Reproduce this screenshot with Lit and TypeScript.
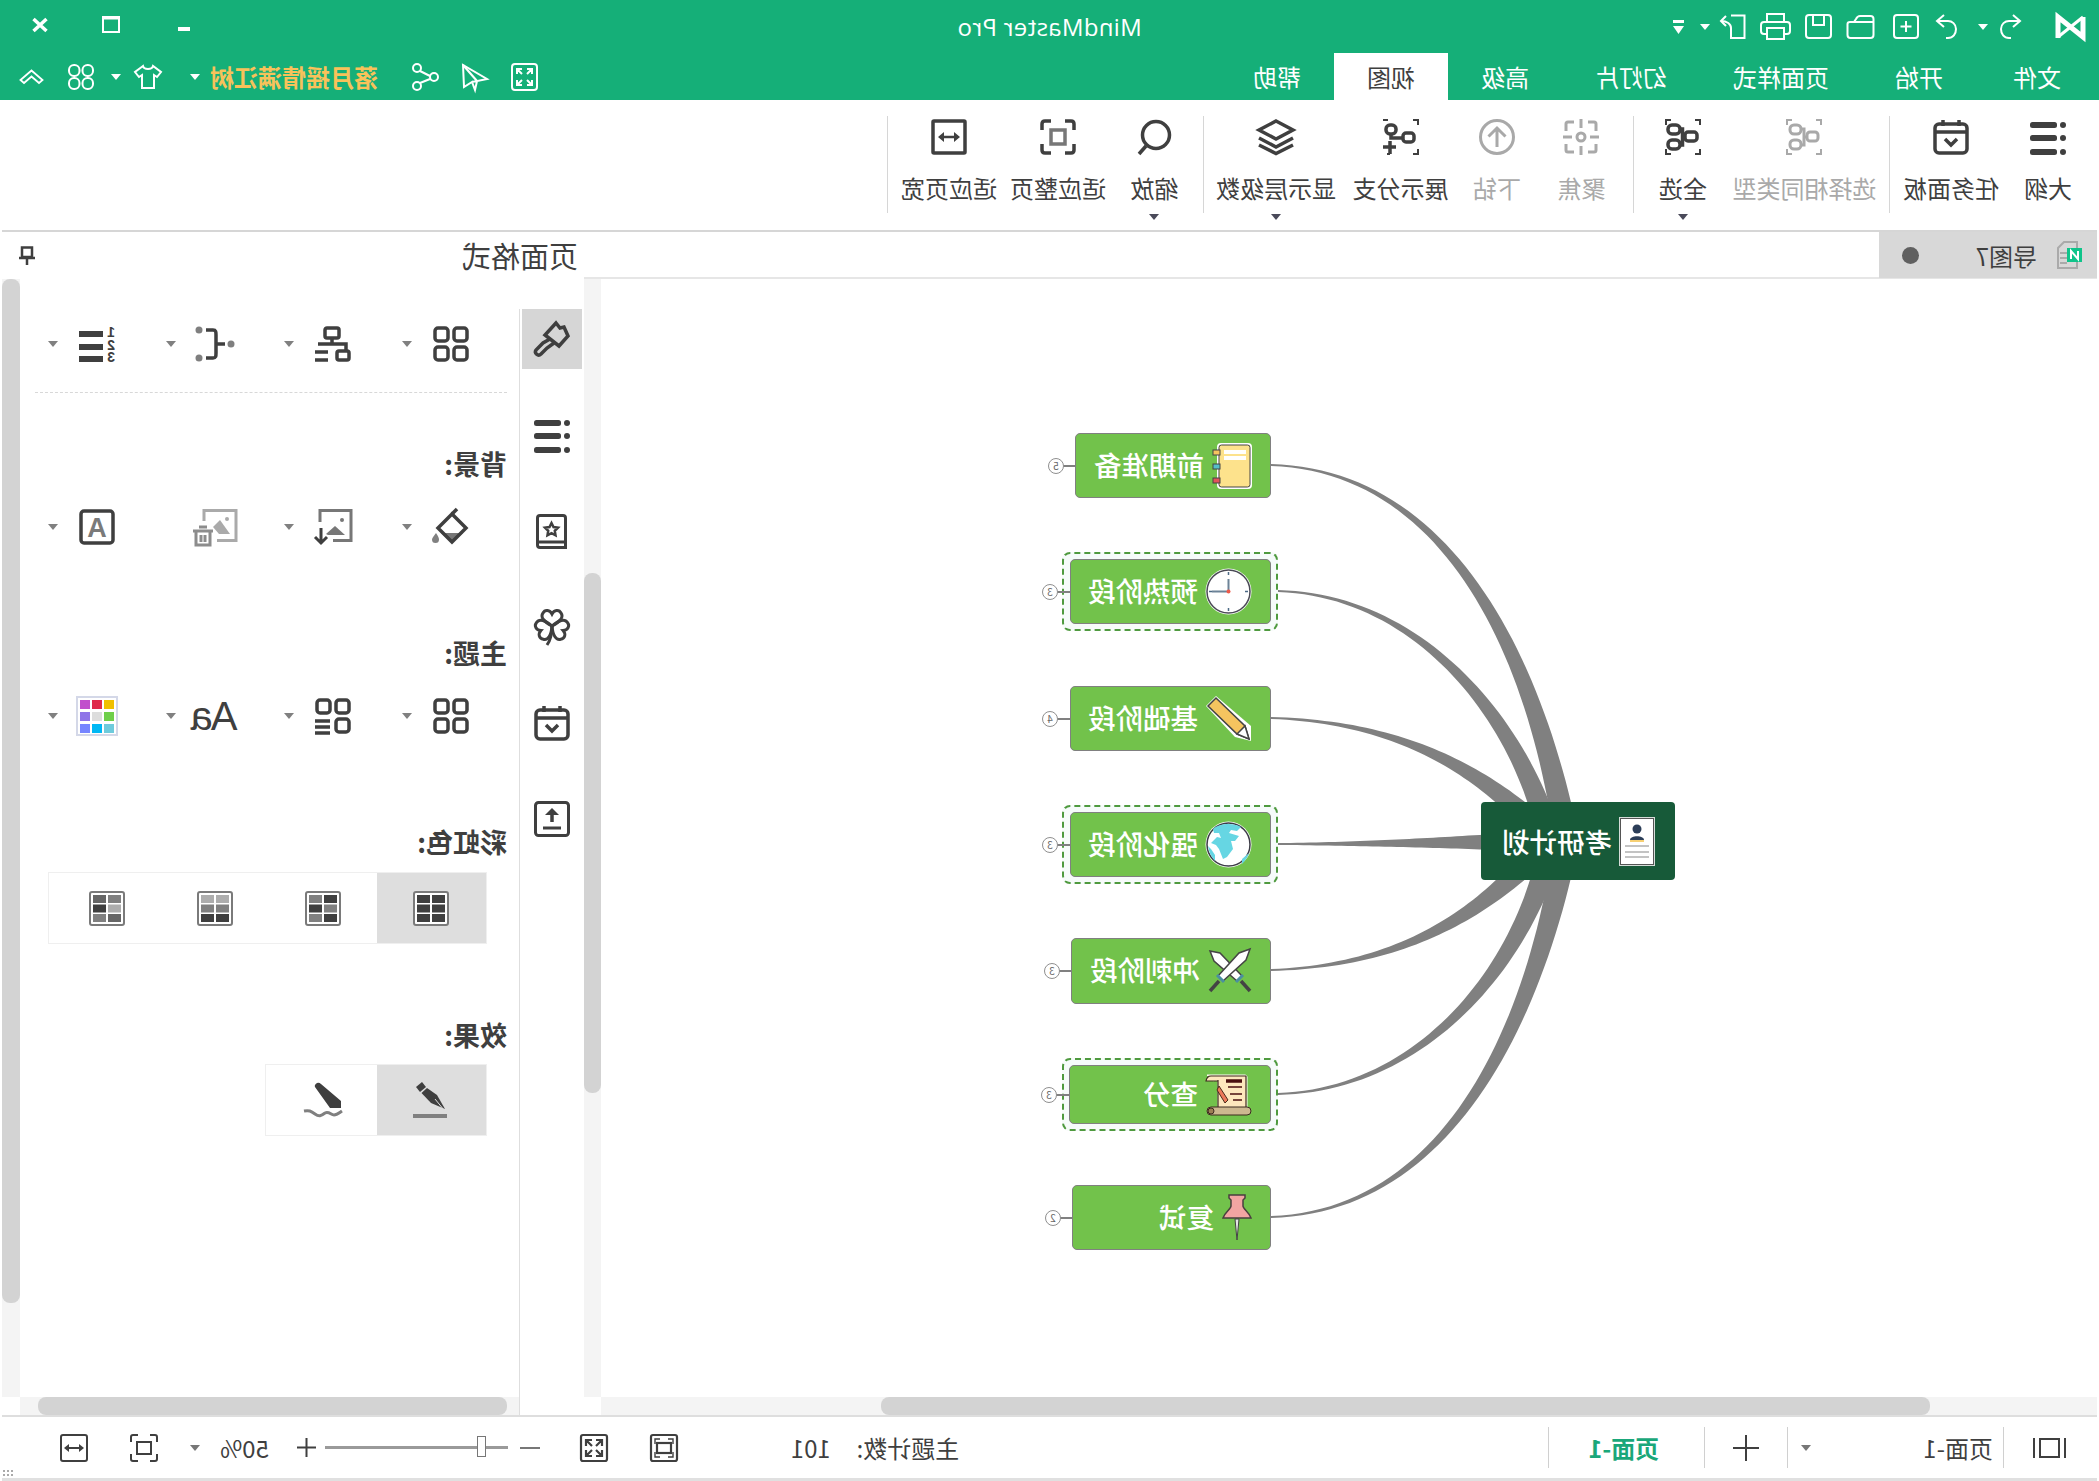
import { LitElement, css, html, svg, nothing } from 'lit';
import { customElement } from 'lit/decorators.js';

// The reference is a horizontally mirrored window. The app is laid out the normal way
// and the host is flipped; icons are drawn as seen in the reference, so they flip back.
const iconStyles = css`
    svg.ic { display: block; flex: none; transform: scaleX(-1); overflow: visible; }
`;

const CORNERS = 'M1 6V1H6M30 1H35V6M35 30V35H30M6 35H1V30';
const HEART = 'M18 18C10 14 6 9 9 5C11 1 16 2 18 6C20 2 25 1 27 5C30 9 26 14 18 18Z';

type Icon = { w: number; h: number; sw?: number; body: unknown };

const ICONS: Record<string, Icon> = {
    logo: { w: 33, h: 28, body: svg`<path d="M4 25V4L29 24V4" stroke-width="5"/><path d="M4 24L29 4" stroke-width="3"/>` },
    redo: { w: 23, h: 25, sw: 2, body: svg`<path d="M12 24H10C5 24 2 20 2 15C2 10 6 7 10 7H21"/><path d="M14 1L21 7L14 13"/>` },
    undo: { w: 22, h: 25, sw: 2, body: svg`<path d="M10 24H12C17 24 20 20 20 15C20 10 16 7 12 7H1"/><path d="M8 1L1 7L8 13"/>` },
    add: { w: 26, h: 25, sw: 2, body: svg`<rect x="1" y="1" width="24" height="23" rx="3"/><path d="M13 7V18M7.500 12.500H18.500"/>` },
    open: { w: 29, h: 25, sw: 2, body: svg`<path d="M1.500 10V21C1.500 23 2.500 24 4.500 24H24.500C26.500 24 27.500 23 27.500 21V5C27.500 3 26.500 2 24.500 2H14C12 2 11 3 10 5L8 8H4C2.500 8 1.500 9 1.500 10ZM8 8H27"/>` },
    save: { w: 27, h: 25, sw: 2, body: svg`<rect x="1" y="1" width="25" height="23" rx="3"/><path d="M8 1V11H19V1"/>` },
    print: { w: 31, h: 27, sw: 2, body: svg`<path d="M7 9V1H24V9"/><path d="M7 21H4C2 21 1 20 1 18V12C1 10 2 9 4 9H27C29 9 30 10 30 12V18C30 20 29 21 27 21H24"/><rect x="7" y="15" width="17" height="11"/>` },
    export: { w: 27, h: 25, sw: 2, body: svg`<path d="M12 1.500H25.500V24H12V14C12 10 8 7 2 7"/><path d="M7 2L2 7L7 12"/>` },
    custom: { w: 11, h: 15, body: svg`<path d="M0 1H11V4H0Z" fill="currentColor" stroke="none"/><path d="M0 7H11L5.500 15Z" fill="currentColor" stroke="none"/>` },
    caret: { w: 10, h: 6, body: svg`<path d="M0 0H10L5 6Z" fill="currentColor" stroke="none"/>` },
    chev: { w: 25, h: 15, sw: 1.800, body: svg`<path d="M1.500 11L12.500 1.500L23.500 11L20 14L12.500 7.500L5 14Z"/>` },
    petals: { w: 26, h: 26, sw: 2, body: svg`<rect x="1" y="1" width="10.500" height="11" rx="5"/><rect x="14.500" y="1" width="10.500" height="11" rx="5"/><rect x="1" y="14" width="10.500" height="11" rx="5"/><rect x="14.500" y="14" width="10.500" height="11" rx="5"/>` },
    shirt: { w: 28, h: 24, sw: 2, body: svg`<path d="M9 1L1 7L5 12L8 10V23H20V10L23 12L27 7L19 1C18 5 10 5 9 1Z"/>` },
    share: { w: 27, h: 28, sw: 2, body: svg`<circle cx="5" cy="5" r="4"/><circle cx="22" cy="14" r="4"/><circle cx="5" cy="23" r="4"/><path d="M8 8L18 13M8 20L18 16"/>` },
    cursor: { w: 27, h: 28, sw: 2, body: svg`<path d="M2 2L3 24L11 19L14 27L16 18L26 16ZM11 19L16 18"/><path d="M2 2L16 18"/>` },
    expand: { w: 27, h: 28, sw: 2, body: svg`<rect x="1" y="1" width="25" height="26" rx="3"/><path d="M6 11V6H11M6 6L11 11M21 11V6H16M21 6L16 11M6 17V22H11M6 22L11 17M21 17V22H16M21 22L16 17"/>` },
    close: { w: 16, h: 14, sw: 3.500, body: svg`<path d="M1.500 1L14.500 13M14.500 1L1.500 13"/>` },
    max: { w: 18, h: 17, sw: 2, body: svg`<path d="M1 1H17V16H1ZM1 2.500H17" />` },
    min: { w: 12, h: 4, body: svg`<path d="M0 0H12V4H0Z" fill="currentColor" stroke="none"/>` },

    outline: { w: 36, h: 36, body: svg`<g fill="currentColor" stroke="none"><rect x="0" y="3" width="27" height="6" rx="2.500"/><rect x="0" y="16" width="27" height="6" rx="2.500"/><rect x="0" y="30" width="27" height="6" rx="2.500"/><circle cx="33" cy="6" r="3"/><circle cx="33" cy="19" r="3"/><circle cx="33" cy="33" r="3"/></g>` },
    cal: { w: 36, h: 36, sw: 3.500, body: svg`<rect x="2" y="5" width="32" height="29" rx="4"/><path d="M2 13H34M10 1V7M26 1V7"/><path d="M12 20L18 26L24 20"/>` },
    sameType: { w: 36, h: 36, sw: 3, body: svg`<path d=${CORNERS} stroke-width="2"/><rect x="4" y="6" width="11" height="9" rx="4"/><rect x="4" y="21" width="11" height="9" rx="4"/><rect x="21" y="13" width="11" height="9" rx="3"/><path d="M15 10H18V26H15M18 18H21"/>` },
    selAll: { w: 36, h: 36, sw: 3.500, body: svg`<path d=${CORNERS} stroke-width="2"/><rect x="3" y="6" width="12" height="9" rx="4"/><rect x="3" y="21" width="12" height="9" rx="4"/><rect x="20" y="13" width="12" height="9" rx="3"/><path d="M15 10H17.500V26H15M17.500 18H20"/>` },
    focus: { w: 36, h: 36, sw: 3, body: svg`<path d="M3 12V5Q3 3 5 3H11M25 3H31Q33 3 33 5V12M33 25V31Q33 33 31 33H25M11 33H5Q3 33 3 31V25"/><circle cx="18" cy="18" r="4"/><path d="M18 0V9M18 27V36M0 18H9M27 18H36"/>` },
    drill: { w: 36, h: 36, sw: 3, body: svg`<circle cx="18" cy="18" r="16.500"/><path d="M18 28V9M9.500 17.500L18 9L26.500 17.500"/>` },
    branch: { w: 37, h: 36, sw: 3.500, body: svg`<path d="M1 1H6M31 1H36V6M36 30V35H31M8 35H5" stroke-width="2"/><rect x="4" y="6" width="10" height="9" rx="4"/><rect x="21" y="14" width="11" height="9" rx="3"/><path d="M9 15V19H21"/><path d="M8 22V35M1 28H14"/>` },
    layers: { w: 40, h: 36, sw: 3.500, body: svg`<path d="M20 2L37 11L20 20L3 11Z"/><path d="M3 19L20 28L37 19"/><path d="M3 26L20 34.500L37 26"/>` },
    search: { w: 34, h: 36, sw: 3.500, body: svg`<circle cx="19" cy="16" r="13.500"/><path d="M9 27L2 35"/>` },
    fitPage: { w: 36, h: 36, sw: 3.500, body: svg`<path d="M2 11V5Q2 2 5 2H11M25 2H31Q34 2 34 5V11M34 25V31Q34 34 31 34H25M11 34H5Q2 34 2 31V25"/><rect x="11" y="11" width="14" height="14" stroke="#777"/>` },
    fitWidth: { w: 36, h: 36, sw: 3.500, body: svg`<rect x="2" y="2" width="32" height="32" rx="1"/><path d="M10 18H26" stroke-width="2.500"/><path d="M7 18L13 13V23ZM29 18L23 13V23Z" fill="currentColor" stroke="none"/>` },

    brush: { w: 37, h: 36, sw: 3.500, body: svg`<path d="M23 2L27 7L31 6L35 15L26 25L12 14Z"/><path d="M17 18L10 22L3 29C1 32 5 36 8 33L14 27L21 22"/>` },
    bookStar: { w: 31, h: 35, sw: 3, body: svg`<path d="M4 1.500H27Q29.500 1.500 29.500 4V33.500H4Q1.500 33.500 1.500 31V4Q1.500 1.500 4 1.500ZM1.500 28H29.500"/><path d="M15.500 9L17.500 13L22 13.700L18.800 16.800L19.500 21.300L15.500 19.200L11.500 21.300L12.200 16.800L9 13.700L13.500 13Z" stroke-width="2.500"/>` },
    leaf: { w: 36, h: 38, sw: 3, body: svg`<path d=${HEART}/><path d=${HEART} transform="rotate(112 18 18)"/><path d=${HEART} transform="rotate(-112 18 18)"/><path d="M18 18Q18 30 13 37"/>` },
    upload: { w: 36, h: 36, sw: 3, body: svg`<rect x="1.500" y="1.500" width="33" height="33" rx="3"/><path d="M18 21V11" stroke-width="3.500"/><path d="M11 14L18 7L25 14Z" fill="currentColor" stroke="none"/><path d="M9 27H27"/>` },
    four: { w: 36, h: 36, sw: 3.500, body: svg`<rect x="2" y="2" width="13" height="13" rx="3"/><rect x="21" y="2" width="13" height="13" rx="3"/><rect x="2" y="21" width="13" height="13" rx="3"/><rect x="21" y="21" width="13" height="13" rx="3"/>` },
    org: { w: 36, h: 36, sw: 3.500, body: svg`<rect x="10" y="2" width="14" height="10" rx="2"/><path d="M17 12V18H31V24M3 18H17"/><rect x="22" y="25" width="12" height="9" rx="2"/><path d="M0 26H13M0 34H13"/>` },
    bracket: { w: 40, h: 36, sw: 3.500, body: svg`<circle cx="4" cy="4" r="3.500" fill="#7f7f7f" stroke="none"/><circle cx="4" cy="32" r="3.500" fill="#7f7f7f" stroke="none"/><circle cx="36" cy="18" r="3.500" fill="#7f7f7f" stroke="none"/><path d="M11 4H18C21 4 21 6 21 9V27C21 30 21 32 18 32H11M21 18H30"/>` },
    listNum: {
        w: 36, h: 36, body: svg`<g fill="currentColor" stroke="none"><rect x="0" y="5" width="24" height="6"/><rect x="0" y="18" width="24" height="6"/><rect x="0" y="30" width="24" height="6"/>
        <g font-family="Liberation Sans, sans-serif" font-size="14" font-weight="700" text-anchor="middle"><text transform="translate(32 11) scale(-1 1)">1</text><text transform="translate(32 24) scale(-1 1)">2</text><text transform="translate(32 36) scale(-1 1)">3</text></g></g>`
    },
    bucket: { w: 37, h: 36, sw: 3.500, body: svg`<path d="M9 24H31L20 34Z" fill="#777" stroke="none"/><path d="M20 5L34 19L20 33L6 19Z"/><path d="M20 5L25 0"/><path d="M4 25C6 28 7 30 7 31.500A3.500 3.500 0 0 1 0 31.500C0 30 2 28 4 25Z" fill="#808080" stroke="none" transform="translate(0 -1)"/>` },
    imgIn: { w: 39, h: 36, sw: 3, body: svg`<path d="M7 13V1.500H38V31.500H20" stroke="#777"/><path d="M13 25L22 17L32 26H15Z" fill="#777" stroke="none"/><circle cx="29" cy="11" r="2" fill="#777" stroke="none"/><path d="M8 19V34M2 28L8 34L14 28"/>` },
    imgDel: { w: 44, h: 37, sw: 3, body: svg`<path d="M11 12V1.500H43V31.500H24" stroke="#aaa"/><path d="M20 18L27 11L37 25H26Z" fill="#aaa" stroke="none"/><circle cx="34" cy="10" r="2" fill="#aaa" stroke="none"/><g stroke="#8c8c8c"><path d="M0 22H20M6 18H14"/><path d="M3 23V36H17V23M8 26V33M12 26V33" stroke-width="3"/></g>` },
    boxA: { w: 36, h: 36, sw: 3.500, body: svg`<rect x="2" y="2" width="32" height="32" rx="3"/><text x="18" y="28" fill="#7a7a7a" stroke="none" font-size="27" font-weight="700" font-family="Liberation Sans, sans-serif" text-anchor="middle">A</text>` },
    half: { w: 36, h: 36, sw: 3.500, body: svg`<rect x="2" y="2" width="13" height="13" rx="3"/><rect x="21" y="2" width="13" height="13" rx="3"/><rect x="21" y="21" width="13" height="13" rx="3"/><path d="M0 23H15M0 29H15M0 35H15"/>` },
    colors: {
        w: 42, h: 40, body: svg`<rect x="1" y="1" width="40" height="38" stroke="#d4d8e8" stroke-width="2" fill="#fff"/><g stroke="none">
        <rect x="4" y="4" width="10" height="9" fill="#c14ecc"/><rect x="16" y="4" width="10" height="9" fill="#df2b4b"/><rect x="28" y="4" width="10" height="9" fill="#f0c000"/>
        <rect x="4" y="16" width="10" height="9" fill="#8f74e8"/><rect x="16" y="16" width="10" height="9" fill="#dddddd"/><rect x="28" y="16" width="10" height="9" fill="#6fcf4a"/>
        <rect x="4" y="28" width="10" height="9" fill="#7685ff"/><rect x="16" y="28" width="10" height="9" fill="#00b8f4"/><rect x="28" y="28" width="10" height="9" fill="#6ecbdc"/></g>`
    },
    pin: { w: 16, h: 19, sw: 2.500, body: svg`<path d="M3 1.500H13V11H3ZM0 12H16M8 12V19"/>` },
    nib: { w: 36, h: 36, body: svg`<g fill="currentColor" stroke="none"><path d="M3 5L9 0L13 5L7 10Z"/><path d="M8.500 11L14 6L24 13L32 27L18 21Z"/></g><path d="M31 28L22 17" stroke="#dedede" stroke-width="1"/><rect x="0" y="32" width="34" height="4" fill="#808080" stroke="none"/>` },
    marker: { w: 40, h: 36, body: svg`<path d="M12 5Q11 3 14 1Q16 0 18 2L38 19V26H27Z" fill="currentColor" stroke="none"/><path d="M1 29C6 28 8 29 12 32C16 35 18 34 22 31C26 29 28 33 31 33C34 33 36 31 39 29" stroke="#808080" stroke-width="3"/>` },
    fitScreen: { w: 28, h: 28, sw: 2.200, body: svg`<rect x="1" y="1" width="26" height="26" rx="2"/><path d="M5 10V5H10M23 10V5H18M5 18V23H10M23 18V23H18" stroke-width="1.400"/><rect x="7" y="9" width="14" height="10"/>` },
    fullScreen: { w: 28, h: 28, sw: 2.200, body: svg`<rect x="1" y="1" width="26" height="26" rx="2"/><path d="M6 12V6H12M6 6L12 12M22 12V6H16M22 6L16 12M6 16V22H12M6 22L12 16M22 16V22H16M22 22L16 16"/>` },
    zoomFit: { w: 28, h: 28, sw: 2, body: svg`<path d="M1 8V3Q1 1 3 1H8M20 1H25Q27 1 27 3V8M27 20V25Q27 27 25 27H20M8 27H3Q1 27 1 25V20"/><rect x="7" y="8" width="14" height="12"/>` },
    zoomWidth: { w: 28, h: 28, sw: 2, body: svg`<rect x="1" y="1" width="26" height="26" rx="2"/><path d="M6 14H22"/><path d="M4 14L9 10V18ZM24 14L19 10V18Z" fill="currentColor" stroke="none"/>` },
    layout: { w: 33, h: 20, sw: 2, body: svg`<path d="M1 0V20M32 0V20"/><rect x="7" y="1" width="19" height="18"/>` },
    plus: { w: 26, h: 26, sw: 2, body: svg`<path d="M13 0V26M0 13H26"/>` },
    plusThin: { w: 19, h: 19, sw: 2, body: svg`<path d="M9.500 0V19M0 9.500H19"/>` },
    docFile: {
        w: 25, h: 28, sw: 2, body: svg`<path d="M7 1H20V27H1V7Z" stroke="#aaa"/><path d="M3 12H10M3 17H10M3 22H10" stroke="#aaa"/><rect x="10" y="7" width="15" height="14" fill="#0fc48a" stroke="none"/><path d="M14 18V10L21 18V10" stroke="#fff" stroke-width="2"/>`
    },
    notebook: {
        w: 40, h: 46, body: svg`<rect x="6" y="1" width="33" height="44" rx="3" fill="#fde28c" stroke="#fff" stroke-width="2"/><rect x="7" y="2" width="31" height="42" rx="2.500" fill="#fde28c" stroke="#444" stroke-width="1"/>
        <rect x="12" y="7" width="22" height="4" fill="#fff" stroke="none"/><rect x="12" y="13" width="22" height="4" fill="#fff" stroke="none"/>
        <rect x="1" y="7" width="7" height="5" fill="#f5c45f" stroke="#444" stroke-width="1"/><rect x="1" y="21" width="7" height="5" fill="#55bfc8" stroke="#444" stroke-width="1"/><rect x="1" y="35" width="7" height="5" fill="#e2545a" stroke="#444" stroke-width="1"/>`
    },
    clock: {
        w: 47, h: 47, body: svg`<circle cx="23.500" cy="23.500" r="23" fill="#fff" stroke="none"/><circle cx="23.500" cy="23.500" r="21.500" fill="#fff" stroke="#4a4a55" stroke-width="1.500"/>
        <path d="M23.500 23.500V11M23.500 23.500H7" stroke="#6d8398" stroke-width="2"/><path d="M23.500 4V7M23.500 40V43M4 23.500H7M40 23.500H43" stroke="#4c6a85" stroke-width="1.500"/><circle cx="23.500" cy="23.500" r="2" fill="#ee5a4a" stroke="none"/>`
    },
    pencil: {
        w: 47, h: 47, body: svg`<path d="M11 1L46 31L46 46L30 42L1 11Z" fill="#fff" stroke="none"/><path d="M11 3L3 11L32 39L44 44L40 31Z" fill="#f5c45f" stroke="#444" stroke-width="1.500"/><path d="M32 39L40 31L44 44Z" fill="#fff" stroke="#444" stroke-width="1.500"/>`
    },
    globe: {
        w: 47, h: 47, body: svg`<circle cx="23.500" cy="23.500" r="23" fill="#fff" stroke="none"/><circle cx="23.500" cy="23.500" r="21.500" fill="#fff" stroke="#3c3c46" stroke-width="1.500"/>
        <path d="M8 8C14 3 26 1 36 6L32 10L26 9L24 12L34 15L30 20L26 20L28 28L22 36L18 38L14 28L11 24L6 22L12 16L16 17L14 12L9 12ZM3 25L6 28L10 34L10 40C6 36 4 31 3 25ZM44 32C42 37 40 40 37 43L37 38Z" fill="#66d6e3" stroke="none"/>`
    },
    swords: {
        w: 44, h: 47, body: svg`<path d="M2 3L12 5L34 28L29 33L6 13Z" fill="#fff" stroke="#444" stroke-width="1.500"/><path d="M42 1L31 5L10 28L15 33L38 12Z" fill="#fff" stroke="#444" stroke-width="1.500"/>
        <path d="M28 34L35 27" stroke="#4a8fa0" stroke-width="3"/><path d="M16 34L9 27" stroke="#4a8fa0" stroke-width="3"/><path d="M33 33L42 43" stroke="#444" stroke-width="3.500"/><path d="M11 33L2 43" stroke="#444" stroke-width="3.500"/>`
    },
    scroll: {
        w: 47, h: 42, body: svg`<path d="M2 1H40Q42 1 42 3V34H13V7Q13 3 8 7Z" fill="#fde7bd" stroke="#fff" stroke-width="1"/><path d="M13 6V34H41V2H6Q2 2 1 7H13" fill="#fde7bd" stroke="#3d2b1f" stroke-width="1.200"/>
        <rect x="2" y="33" width="44" height="8" rx="4" fill="#cdb890" stroke="#3d2b1f" stroke-width="1"/><circle cx="6" cy="37" r="3" fill="#9d7f55" stroke="#3d2b1f" stroke-width="1"/>
        <path d="M21 7H37" stroke="#4a0f0f" stroke-width="3.500"/><path d="M23 13H37M25 20H37M28 26H37" stroke="#4a0f0f" stroke-width="1.500"/><path d="M14 12L23 26L20 29L12 16Z" fill="#ed7a5a" stroke="#4a2a1a" stroke-width="1"/>`
    },
    pushPin: {
        w: 30, h: 47, body: svg`<path d="M7 1H23V4L21 6V12C21 15 27 18 29 24H1C3 18 9 15 9 12V6L7 4Z" fill="#f2a5a2" stroke="#4a3f3f" stroke-width="1.500"/><path d="M13 25H17L15 46Z" fill="#e6e6e6" stroke="#444" stroke-width="1"/>`
    },
    resume: {
        w: 36, h: 49, body: svg`<rect x="0.500" y="0.500" width="35" height="48" fill="#fff" stroke="#d5dcd8" stroke-width="1"/><rect x="1.500" y="1.500" width="33" height="46" fill="#fff" stroke="#555" stroke-width="1"/>
        <circle cx="18" cy="12" r="4.500" fill="#2c3e58" stroke="none"/><path d="M11 23C11 18 25 18 25 23Z" fill="#2c3e58" stroke="none"/><path d="M11 24H25" stroke="#f5c045" stroke-width="1.500"/><path d="M6 29H30M6 35H30M6 40H30" stroke="#b0b0b0" stroke-width="1.500"/>`
    },
};

function icon(name: string) {
    const i = ICONS[name];
    return html`<svg class="ic" width=${i.w} height=${i.h} viewBox="0 0 ${i.w} ${i.h}" fill="none" stroke="currentColor" stroke-width=${i.sw ?? 2}>${i.body}</svg>`;
}

function rainbow(rows: string[][]) {
    return html`<svg class="ic" width="36" height="35" viewBox="0 0 36 35">
        <rect x="1" y="1" width="34" height="33" rx="2" fill="#fff" stroke="#7a7a7a" stroke-width="2"/>
        ${rows.map((r, y) => r.map((c, x) => svg`<rect x=${4 + x * 15} y=${4 + y * 9.500} width="13" height="8" fill=${c}/>`))}
    </svg>`;
}

// map geometry, page coordinates of the unflipped layout
const OX = 2;
const OY = 279;

type Pt = [number, number];

function taper(p0: Pt, c1: Pt, c2: Pt, p3: Pt, w0: number, w1: number) {
    const left: string[] = [];
    const right: string[] = [];
    const n = 48;
    for (let i = 0; i <= n; i++) {
        const t = i / n;
        const u = 1 - t;
        const x = u * u * u * p0[0] + 3 * u * u * t * c1[0] + 3 * u * t * t * c2[0] + t * t * t * p3[0];
        const y = u * u * u * p0[1] + 3 * u * u * t * c1[1] + 3 * u * t * t * c2[1] + t * t * t * p3[1];
        const dx = 3 * u * u * (c1[0] - p0[0]) + 6 * u * t * (c2[0] - c1[0]) + 3 * t * t * (p3[0] - c2[0]);
        const dy = 3 * u * u * (c1[1] - p0[1]) + 6 * u * t * (c2[1] - c1[1]) + 3 * t * t * (p3[1] - c2[1]);
        const len = Math.hypot(dx, dy) || 1;
        const w = (w1 + (w0 - w1) * Math.pow(u, 1.5)) / 2;
        left.push(`${(x - OX - (dy / len) * w).toFixed(1)} ${(y - OY + (dx / len) * w).toFixed(1)}`);
        right.unshift(`${(x - OX + (dy / len) * w).toFixed(1)} ${(y - OY - (dx / len) * w).toFixed(1)}`);
    }
    return `M${left.join('L')}L${right.join('L')}Z`;
}

// screen x of the reference -> x of the flipped layout
const fx = (x: number) => 2099 - x;
const pt = (x: number, y: number): Pt => [fx(x), y];

const BRANCHES: Pt[][] = [
    [pt(1565, 830), pt(1530, 640), pt(1440, 470), pt(1271, 465)],
    [pt(1550, 840), pt(1520, 720), pt(1420, 595), pt(1278, 591)],
    [pt(1540, 830), pt(1480, 770), pt(1400, 722), pt(1271, 718)],
    [pt(1560, 841), pt(1480, 842), pt(1380, 844), pt(1278, 844)],
    [pt(1540, 850), pt(1480, 915), pt(1400, 966), pt(1271, 970)],
    [pt(1550, 850), pt(1520, 970), pt(1420, 1090), pt(1278, 1094)],
    [pt(1565, 850), pt(1530, 1040), pt(1440, 1212), pt(1271, 1217)],
];

const NODES = [
    { text: '前期准备', icon: 'notebook', y: 433, w: 196, h: 65, n: 5, cx: 1056, gap: 8 },
    { text: '预热阶段', icon: 'clock', y: 559, w: 201, h: 65, n: 3, cx: 1050, gap: 7, sel: true },
    { text: '基础阶段', icon: 'pencil', y: 686, w: 201, h: 65, n: 4, cx: 1050, gap: 7 },
    { text: '强化阶段', icon: 'globe', y: 812, w: 201, h: 65, n: 3, cx: 1050, gap: 7, sel: true },
    { text: '冲刺阶段', icon: 'swords', y: 938, w: 200, h: 66, n: 3, cx: 1052, gap: 8 },
    { text: '查分', icon: 'scroll', y: 1065, w: 202, h: 59, n: 3, cx: 1049, gap: 7, sel: true },
    { text: '复试', icon: 'pushPin', y: 1185, w: 199, h: 65, n: 2, cx: 1053, gap: 8 },
];

@customElement('mind-map')
export class MindMap extends LitElement {
    static styles = [iconStyles, css`
        :host { display: block; position: relative; width: 100%; height: 100%; overflow: hidden; }
        .wires { position: absolute; left: 0; top: 0; }
        .node {
            position: absolute;
            box-sizing: border-box;
            display: flex;
            align-items: center;
            padding-left: 18px;
            background: #72c24b;
            border: 1px solid #808080;
            border-radius: 5px;
            color: #fff;
            font-size: 27.500px;
            font-weight: 500;
            white-space: nowrap;
        }
        .node span { padding-bottom: 4px; }
        .selection {
            position: absolute;
            box-sizing: border-box;
            width: 216px;
            background: #f6fbfa;
            border: 2px dashed #4f9a3f;
            border-radius: 8px;
        }
        .stub { position: absolute; height: 2px; background: #808080; }
        .count {
            position: absolute;
            box-sizing: border-box;
            width: 16px;
            height: 16px;
            border: 1px solid #8f8f8f;
            border-radius: 50%;
            background: #fff;
            color: #666;
            font-size: 10px;
            line-height: 14px;
            text-align: center;
        }
        .root {
            position: absolute;
            left: 422px;
            top: 523px;
            box-sizing: border-box;
            width: 194px;
            height: 78px;
            display: flex;
            align-items: center;
            gap: 7px;
            padding-left: 20px;
            background: #175a39;
            border-radius: 4px;
            color: #fff;
            font-size: 27.500px;
            font-weight: 500;
            white-space: nowrap;
        }
    `];

    render() {
        const edge = fx(1271);
        return html`
            <svg class="wires" width="1496" height="1118">
                ${BRANCHES.map((b) => svg`<path d=${taper(b[0], b[1], b[2], b[3], 24, 2)} fill="#808080"/>`)}
            </svg>
            ${NODES.filter((n) => n.sel).map((n) => html`
                <div class="selection" style="left:${fx(1278) - OX}px;top:${n.y - 7 - OY}px;height:${n.h + 14}px"></div>
            `)}
            ${NODES.map((n) => html`
                <div class="stub" style="left:${edge + n.w - OX}px;top:${n.y + n.h / 2 - 1 - OY}px;width:${fx(n.cx) - edge - n.w}px"></div>
                <div class="count" style="left:${fx(n.cx) - 8 - OX}px;top:${n.y + n.h / 2 - 8 - OY}px">${n.n}</div>
                <div class="node" style="left:${edge - OX}px;top:${n.y - OY}px;width:${n.w}px;height:${n.h}px;gap:${n.gap}px">
                    ${icon(n.icon)}<span>${n.text}</span>
                </div>
            `)}
            <div class="root">${icon('resume')}<span>考研计划</span></div>
        `;
    }
}

const QUICK = [
    { i: 'logo', g: 12 }, { i: 'redo', g: 32 }, { i: 'caret', g: 11 }, { i: 'undo', g: 20 }, { i: 'add', g: 17 },
    { i: 'open', g: 18 }, { i: 'save', g: 14 }, { i: 'print', g: 14 }, { i: 'export', g: 14 }, { i: 'caret', g: 9 }, { i: 'custom', g: 16 },
];

const TABS = ['文件', '开始', '页面样式', '幻灯片', '高级', '视图', '帮助'];

const TOOLS = [
    { t: '大纲', i: 'outline', w: 72 },
    { t: '任务面板', i: 'cal', w: 122 },
    { sep: 0 },
    { t: '选择相同类型', i: 'sameType', w: 169, off: true },
    { t: '全选', i: 'selAll', w: 74, more: true },
    { sep: 12 },
    { t: '聚焦', i: 'focus', w: 103, off: true },
    { t: '下钻', i: 'drill', w: 66, off: true },
    { t: '展示分支', i: 'branch', w: 127 },
    { t: '显示层级数', i: 'layers', w: 122, more: true },
    { sep: 11 },
    { t: '缩放', i: 'search', w: 97, more: true },
    { t: '适应整页', i: 'fitPage', w: 96 },
    { t: '适应页宽', i: 'fitWidth', w: 122 },
    { sep: 0 },
];

const RAIL = ['brush', 'outline', 'bookStar', 'leaf', 'cal', 'upload'];

const D = '#3f3f3f';
const M = '#808080';
const L = '#adadad';
const Q = '#666';

@customElement('app-root')
export class AppRoot extends LitElement {
    static styles = [iconStyles, css`
        :host {
            display: block;
            width: 2099px;
            height: 1481px;
            overflow: hidden;
            transform: scaleX(-1);
            background: #fff;
            color: #3f3f3f;
            font-family: "Noto Sans CJK SC", "Noto Sans", sans-serif;
            font-size: 24px;
        }
        .app { display: flex; flex-direction: column; height: 100%; }

        /* green caption + ribbon tabs */
        .caption { flex: none; height: 100px; background: #15af78; color: #fff; }
        .row-top { height: 53px; display: grid; grid-template-columns: 1fr auto 1fr; align-items: center; }
        .quick { display: flex; align-items: center; }
        .app-title { font-family: "Open Sans", sans-serif; font-size: 24px; line-height: 53px; letter-spacing: .3px; }
        .win { display: flex; align-items: center; justify-content: flex-end; padding-right: 32px; }
        .win .m-min { margin-top: 4px; }
        .win .m-max { margin-left: 58px; margin-top: -4px; }
        .win .m-close { margin-left: 54px; margin-top: -4px; }
        .row-tabs { height: 47px; display: flex; align-items: stretch; padding-left: 5px; }
        .tab { padding: 0 33px; line-height: 47px; white-space: nowrap; }
        .tab:first-child { padding-right: 37px; }
        .tab.on { background: #fff; color: #3f3f3f; }
        .row-tabs .tools { margin-left: auto; display: flex; align-items: center; padding-right: 19px; }
        .author { color: #f8c25a; font-weight: 700; margin: 0 10px 0 34px; white-space: nowrap; }

        /* ribbon */
        .ribbon {
            flex: none;
            height: 130px;
            display: flex;
            padding-left: 13px;
            margin: 0 2px;
            border-bottom: 2px solid #d6d6d6;
        }
        .tool { position: relative; flex: none; display: flex; flex-direction: column; align-items: center; padding-top: 19px; white-space: nowrap; }
        .tool .name { margin-top: 18px; line-height: 30px; }
        .tool.off { color: #a9a9a9; }
        .tool .down { position: absolute; top: 114px; left: 50%; margin-left: -5px; color: #4a4a5a; }
        .vsep { flex: none; width: 1px; height: 97px; margin-top: 16px; background: #d6d6d6; }

        /* work area */
        .work { flex: 1; min-height: 0; display: flex; margin: 0 2px; }
        .doc { flex: none; width: 1513px; display: flex; flex-direction: column; }
        .doc-tabs { flex: none; height: 47px; box-sizing: border-box; border-bottom: 2px solid #e6e6e6; }
        .doc-tab {
            width: 218px;
            height: 46px;
            display: flex;
            align-items: center;
            box-sizing: border-box;
            padding-left: 15px;
            background: #d8d8d8;
        }
        .doc-tab .name { margin-left: 20px; }
        .doc-tab .dot { width: 17px; height: 17px; margin-left: 57px; border-radius: 50%; background: #606060; }
        .doc-body { flex: 1; min-height: 0; display: flex; }
        .canvas { flex: 1; min-width: 0; }
        .sb-v { flex: none; width: 17px; background: #f4f4f4; position: relative; }
        .sb-v i { position: absolute; left: 0; right: 0; background: #d3d3d3; border-radius: 8px; }
        .sb-h { flex: none; height: 18px; background: #f4f4f4; position: relative; }
        .sb-h i { position: absolute; top: 0; bottom: 0; background: #d3d3d3; border-radius: 8px; }
        .sb-h .corner { position: absolute; top: 0; bottom: 0; width: 17px; background: #fff; }

        .pane { flex: 1; min-width: 0; display: flex; flex-direction: column; }
        .pane-head { flex: none; height: 47px; display: flex; align-items: center; padding-left: 6px; }
        .pane-title { font-size: 29px; line-height: 47px; }
        .pane-pin { margin-left: auto; margin-right: 17px; }
        .pane-body { flex: 1; min-height: 0; display: flex; }
        .rail { flex: none; width: 65px; margin-top: 30px; padding-left: 2px; box-sizing: border-box; border-right: 1px solid #dedede; }
        .rail-item { width: 60px; height: 60px; margin-bottom: 36px; display: flex; align-items: center; justify-content: center; }
        .rail-item.on { background: #d6d6d6; }
        .props { flex: 1; min-width: 0; display: flex; flex-direction: column; }
        .props-main { flex: 1; min-height: 0; display: flex; }
        .props-scroll { flex: 1; min-width: 0; padding: 47px 0 0 12px; box-sizing: border-box; }
        .props-bar { flex: none; width: 18px; }
        .icon-row { display: flex; padding-left: 38px; }
        .cell { flex: none; width: 118px; display: flex; align-items: center; }
        .slot { flex: none; width: 36px; height: 36px; display: flex; align-items: center; justify-content: center; }
        .cell .more { margin-left: 21px; color: #808080; }
        .aa { font-family: "Liberation Sans", sans-serif; font-size: 40px; line-height: 36px; letter-spacing: -2px; white-space: nowrap; }
        .dash { width: 472px; margin-top: 30px; border-top: 1px dashed #d8d8d8; }
        .label { font-size: 27px; font-weight: 700; line-height: 32px; }
        .seg { display: flex; width: fit-content; margin-left: 20px; border: 1px solid #efefef; }
        .seg-cell { width: 108px; height: 70px; display: flex; align-items: center; justify-content: center; }
        .seg-cell.on { width: 109px; background: #dedede; }

        /* status bar */
        .status {
            flex: none;
            height: 66px;
            box-sizing: border-box;
            margin: 0 2px;
            display: flex;
            align-items: center;
            border-top: 2px solid #dedede;
            border-bottom: 3px solid #e0e0e0;
            position: relative;
            white-space: nowrap;
        }
        .status .bar { width: 1px; height: 41px; background: #d0d0d0; }
        .status .active-page { color: #1aa77a; font-weight: 700; }
        .status .more { color: #777; }
        .status .num { margin-left: 15px; }
        .status .slider { position: relative; width: 183px; height: 3px; background: #9a9a9a; }
        .status .slider i { position: absolute; left: 22px; top: -10px; width: 9px; height: 21px; box-sizing: border-box; background: #fff; border: 1px solid #777; }
        .grip { position: absolute; right: 0; bottom: 0; width: 12px; height: 9px; background-image: radial-gradient(#aaa 1px, transparent 1px); background-size: 4px 4px; }
    `];

    private cell(name: string, more = true) {
        return html`<div class="cell"><div class="slot">${icon(name)}</div>${more ? html`<span class="more">${icon('caret')}</span>` : nothing}</div>`;
    }

    private gap(g: number) {
        return html`<span style="flex:none;width:${g}px"></span>`;
    }

    render() {
        return html`
            <div class="app">
                <div class="caption">
                    <div class="row-top">
                        <div class="quick">
                            ${QUICK.map((q) => html`${this.gap(q.g)}${icon(q.i)}`)}
                        </div>
                        <div class="app-title">MindMaster Pro</div>
                        <div class="win">
                            <span class="m-min">${icon('min')}</span>
                            <span class="m-max">${icon('max')}</span>
                            <span class="m-close">${icon('close')}</span>
                        </div>
                    </div>
                    <div class="row-tabs">
                        ${TABS.map((t) => html`<div class="tab ${t === '视图' ? 'on' : ''}">${t}</div>`)}
                        <div class="tools">
                            ${icon('expand')}${this.gap(23)}${icon('cursor')}${this.gap(22)}${icon('share')}
                            <span class="author">落月摇情满江树</span>
                            ${icon('caret')}${this.gap(28)}${icon('shirt')}${this.gap(13)}${icon('caret')}${this.gap(17)}${icon('petals')}${this.gap(24)}${icon('chev')}
                        </div>
                    </div>
                </div>

                <div class="ribbon">
                    ${TOOLS.map((t) => t.i ? html`
                        <div class="tool ${t.off ? 'off' : ''}" style="width:${t.w}px">
                            ${icon(t.i)}
                            <span class="name">${t.t}</span>
                            ${t.more ? html`<span class="down">${icon('caret')}</span>` : nothing}
                        </div>
                    ` : html`<div class="vsep" style="margin-left:${t.sep}px"></div>`)}
                </div>

                <div class="work">
                    <div class="doc">
                        <div class="doc-tabs">
                            <div class="doc-tab">${icon('docFile')}<span class="name">导图7</span><span class="dot"></span></div>
                        </div>
                        <div class="doc-body">
                            <div class="canvas"><mind-map></mind-map></div>
                            <div class="sb-v"><i style="top:294px;height:520px"></i></div>
                        </div>
                        <div class="sb-h"><i style="left:167px;width:1049px"></i><span class="corner" style="right:0"></span></div>
                    </div>
                    <div class="pane">
                        <div class="pane-head">
                            <span class="pane-title">页面格式</span>
                            <span class="pane-pin">${icon('pin')}</span>
                        </div>
                        <div class="pane-body">
                            <div class="rail">
                                ${RAIL.map((r, i) => html`<div class="rail-item ${i === 0 ? 'on' : ''}">${icon(r)}</div>`)}
                            </div>
                            <div class="props">
                                <div class="props-main">
                                    <div class="props-scroll">
                                        <div class="icon-row">${this.cell('four')}${this.cell('org')}${this.cell('bracket')}${this.cell('listNum')}</div>
                                        <div class="dash"></div>
                                        <div class="label" style="margin-top:55px">背景:</div>
                                        <div class="icon-row" style="margin-top:29px">${this.cell('bucket')}${this.cell('imgIn')}${this.cell('imgDel', false)}${this.cell('boxA')}</div>
                                        <div class="label" style="margin-top:92px">主题:</div>
                                        <div class="icon-row" style="margin-top:29px">
                                            ${this.cell('four')}${this.cell('half')}
                                            <div class="cell"><div class="slot"><span class="aa">Aa</span></div><span class="more">${icon('caret')}</span></div>
                                            ${this.cell('colors')}
                                        </div>
                                        <div class="label" style="margin-top:92px">彩虹色:</div>
                                        <div class="seg" style="margin-top:14px;padding-right:4px">
                                            <div class="seg-cell on">${rainbow([[D, D], [D, D], [D, D]])}</div>
                                            <div class="seg-cell">${rainbow([[M, D], [D, M], [M, D]])}</div>
                                            <div class="seg-cell">${rainbow([[L, L], [M, M], [D, D]])}</div>
                                            <div class="seg-cell">${rainbow([[Q, M], [D, L], [M, Q]])}</div>
                                        </div>
                                        <div class="label" style="margin-top:75px">效果:</div>
                                        <div class="seg" style="margin-top:13px;padding-right:3px">
                                            <div class="seg-cell on">${icon('nib')}</div>
                                            <div class="seg-cell">${icon('marker')}</div>
                                        </div>
                                    </div>
                                    <div class="sb-v props-bar"><i style="top:0;height:1024px"></i></div>
                                </div>
                                <div class="sb-h"><i style="left:12px;width:469px"></i><span class="corner" style="right:0;width:18px"></span></div>
                            </div>
                        </div>
                    </div>
                </div>

                <div class="status">
                    ${this.gap(31)}${icon('layout')}${this.gap(29)}<span class="bar"></span>${this.gap(10)}<span>页面-1</span>
                    ${this.gap(112)}<span class="more">${icon('caret')}</span>${this.gap(13)}<span class="bar"></span>
                    ${this.gap(28)}${icon('plus')}${this.gap(28)}<span class="bar"></span>
                    ${this.gap(45)}<span class="active-page">页面-1</span>${this.gap(39)}<span class="bar"></span>
                    ${this.gap(589)}<span>主题计数: &nbsp;<span class="num">101</span></span>
                    ${this.gap(113)}${icon('fitScreen')}${this.gap(42)}${icon('fullScreen')}
                    ${this.gap(40)}<span style="width:20px;height:2px;background:#777"></span>${this.gap(12)}
                    <span class="slider"><i></i></span>${this.gap(9)}${icon('plusThin')}
                    ${this.gap(28)}<span>50%</span>${this.gap(20)}<span class="more">${icon('caret')}</span>
                    ${this.gap(32)}${icon('zoomFit')}${this.gap(42)}${icon('zoomWidth')}
                    <span class="grip"></span>
                </div>
            </div>
        `;
    }
}
